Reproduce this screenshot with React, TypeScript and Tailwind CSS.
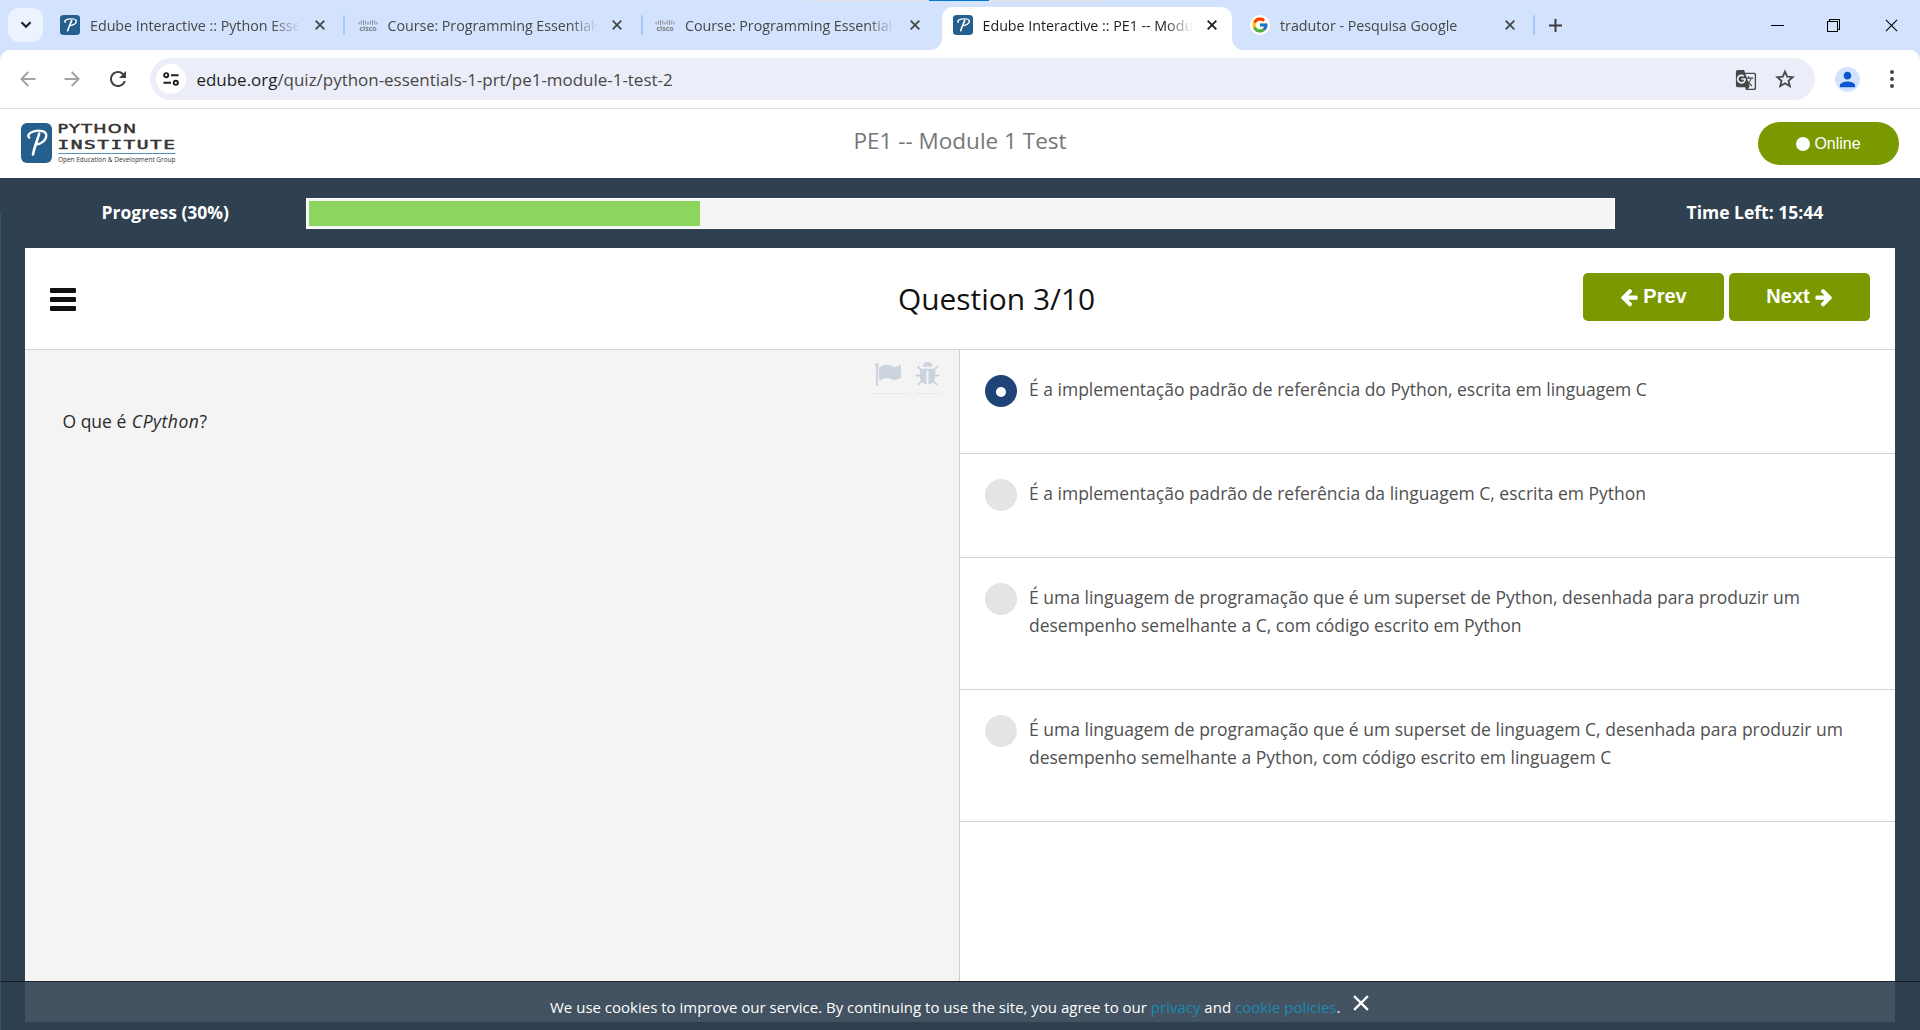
import type { ReactNode } from "react";
import { FcGoogle } from "react-icons/fc";
import { MdGTranslate, MdPerson, MdRefresh } from "react-icons/md";

function PyLogo({ className }: { className: string }) {
  return (
    <svg viewBox="0 0 31 40" preserveAspectRatio="none" className={className}>
      <rect width="31" height="40" rx="6" fill="#255f8d" />
      <g fill="none" stroke="#fff" strokeLinecap="round" strokeLinejoin="round">
        <path d="M8.3 14.6C6.2 13.2 7.600 9.600 12.800 8.300c5.700-1.400 12.600 -.6 12.500 4.200-.1 5-5.200 8.300-9.600 8.800" strokeWidth="2.300" />
        <path d="M18.200 10.500C16.500 17 13.500 23.500 12 31.500" strokeWidth="2.600" />
      </g>
    </svg>
  );
}

function CiscoLogo() {
  const bars = [3, 5, 8, 5, 3, 5, 8, 5, 3];
  return (
    <svg viewBox="0 0 20 20" className="size-5">
      {bars.map((h, i) => (
        <rect key={i} x={0.5 + i * 2.25} y={h === 8 ? 5 : h === 5 ? 5.5 : 7} width="1" height={h === 8 ? 5 : h === 5 ? 4 : 2.5} fill="#8b909a" />
      ))}
      <text x="1.500" y="15.800" textLength="17" lengthAdjust="spacingAndGlyphs" fontFamily="Open Sans, sans-serif" fontWeight="700" fontSize="6.500" fill="#777c86">
        cisco
      </text>
    </svg>
  );
}

function Cross({ className, width = 2 }: { className: string; width?: number }) {
  return (
    <svg viewBox="0 0 10 10" className={className} fill="none" stroke="currentColor" strokeWidth={width}>
      <path d="M.7 .7l8.600 8.600M9.300 .7L.7 9.300" />
    </svg>
  );
}

type TabProps = { icon: ReactNode; title: string; active?: boolean; separator?: boolean };

function Tab({ icon, title, active, separator }: TabProps) {
  return (
    <div className="flex h-[43px] w-[297.5px] shrink-0 items-start">
      <div
        className={
          active
            ? "relative flex h-full w-[290px] items-start rounded-t-[11px] bg-white pl-[11px] text-[#1f1f1f]"
            : "relative flex h-full w-[290px] items-start pl-[11px] text-[#474747]"
        }
      >
        {active && (
          <>
            <span className="absolute bottom-0 -left-3 size-3 bg-[radial-gradient(circle_at_0_0,transparent_11.5px,white_12.5px)]" />
            <span className="absolute -right-3 bottom-0 size-3 bg-[radial-gradient(circle_at_100%_0,transparent_11.5px,white_12.5px)]" />
          </>
        )}
        <span className="mt-2 flex size-5 shrink-0 items-center justify-center">{icon}</span>
        <span className="mt-[9px] ml-2.5 w-[209px] shrink-0 overflow-hidden text-[14.3px] leading-5 tracking-[-0.03px] whitespace-nowrap [mask-image:linear-gradient(to_right,black_182px,transparent_210px)]">
          {title}
        </span>
        <Cross className="mt-[13px] ml-[15.500px] size-[10px] shrink-0" width={1.8} />
      </div>
      {separator && <span className="mt-2 ml-[4px] h-5 w-[2px] rounded-full bg-[#a8c7fa]" />}
    </div>
  );
}

function Browser() {
  return (
    <header className="flex h-[109px] shrink-0 flex-col bg-[#d3e3fd]">
      <div className="relative flex h-[50px] items-end">
        <div className="absolute top-0 left-[809px] flex h-px w-[300px] justify-center bg-[#e1e1e1]">
          <span className="w-[60px] bg-[#0078d7]" />
        </div>
        <div className="mb-2 ml-2 flex h-[34px] w-[35px] items-center justify-center rounded-[11px] bg-[#ecf2fe]">
          <svg viewBox="0 0 12 8" className="h-2 w-3" fill="none" stroke="#1f1f1f" strokeWidth="2.2">
            <path d="M1.500 1.200L6 5.700l4.500-4.500" />
          </svg>
        </div>
        <nav className="ml-1.5 flex">
          <Tab icon={<PyLogo className="size-5" />} title="Edube Interactive :: Python Essen" separator />
          <Tab icon={<CiscoLogo />} title="Course: Programming Essentials" separator />
          <Tab icon={<CiscoLogo />} title="Course: Programming Essentials" />
          <Tab icon={<PyLogo className="size-5" />} title="Edube Interactive :: PE1 -- Modu" active />
          <Tab
            icon={
              <span className="flex size-5 items-center justify-center rounded-full bg-white">
                <FcGoogle className="size-[18px]" />
              </span>
            }
            title="tradutor - Pesquisa Google"
            separator
          />
        </nav>
        <svg viewBox="0 0 13 13" className="mb-[18.5px] ml-[12.5px] size-[13px]" stroke="#3c3c3c" strokeWidth="2">
          <path d="M6.500 0v13M0 6.500h13" />
        </svg>
        <div className="mr-[22px] mb-[18px] ml-auto flex items-center gap-[43px] text-black">
          <svg viewBox="0 0 13 13" className="size-[13px]" shapeRendering="crispEdges">
            <path d="M0 6h13v1H0z" />
          </svg>
          <svg viewBox="0 0 13 13" className="size-[13px]" fill="none" stroke="currentColor" shapeRendering="crispEdges">
            <path d="M.5 2.500h10v10H.5zM2.500 2.500v-2h10v10h-2" />
          </svg>
          <Cross className="ml-[2px] size-[13px]" width={0.85} />
        </div>
      </div>
      <div className="flex h-[59px] items-center rounded-t-[10px] border-b border-[#dfe0e2] bg-white">
        <svg viewBox="0 0 16 16" className="ml-5 size-4" fill="none" stroke="#a3a3a3" strokeWidth="1.9">
          <path d="M15.500 8H1.500M8.300 1L1.400 8l6.900 7" />
        </svg>
        <svg viewBox="0 0 16 16" className="ml-[28px] size-4" fill="none" stroke="#a3a3a3" strokeWidth="1.9">
          <path d="M.5 8h14M7.700 1l6.900 7-6.900 7" />
        </svg>
        <MdRefresh className="ml-[26px] size-[24px] text-[#3f3f3f]" />
        <div className="ml-5 flex h-[42px] w-[1665px] items-center rounded-full bg-[#ebeef8] pl-1.5">
          <span className="flex size-[30px] items-center justify-center rounded-full bg-white">
            <svg viewBox="0 0 16 14" className="h-[14px] w-4" fill="none" stroke="#1f1f1f" strokeWidth="1.9">
              <circle cx="3.200" cy="3.200" r="2.100" />
              <path d="M8 3.200h7.500M.5 10.800H8" />
              <circle cx="12.800" cy="10.800" r="2.100" />
            </svg>
          </span>
          <span className="mt-px ml-[10.500px] text-[16.950px] leading-6 text-[#474747]">
            <span className="text-[#1f1f1f]">edube.org</span>/quiz/python-essentials-1-prt/pe1-module-1-test-2
          </span>
          <MdGTranslate className="mt-px ml-auto size-[22px] text-[#474747]" />
          <svg viewBox="0 0 20 20" className="mr-5 ml-[18px] size-5" fill="none" stroke="#474747" strokeWidth="1.8">
            <path d="M10 2.600l2.200 5.100 5.500.5-4.200 3.600 1.300 5.400L10 14.300l-4.800 2.900 1.300-5.400-4.200-3.600 5.500-.5z" />
          </svg>
        </div>
        <span className="ml-5 flex size-[25px] items-center justify-center rounded-full bg-[#d3e3fd]">
          <MdPerson className="size-[23px] text-[#0b57d0]" />
        </span>
        <span className="ml-[30px] flex flex-col gap-[3.500px]">
          <i className="size-[3.5px] rounded-full bg-[#474747]" />
          <i className="size-[3.5px] rounded-full bg-[#474747]" />
          <i className="size-[3.5px] rounded-full bg-[#474747]" />
        </span>
      </div>
    </header>
  );
}

function SiteHeader() {
  return (
    <div className="grid h-[69px] shrink-0 grid-cols-[minmax(0,1fr)_auto_minmax(0,1fr)] items-start bg-white px-[21px]">
      <div className="mt-[14px] flex">
        <PyLogo className="h-10 w-[31px]" />
        <svg viewBox="0 0 118 42" className="ml-[6px] h-[42px] w-[118px]">
          <g fontSize="13" fill="#333" stroke="#333" strokeWidth=".5">
            <text x="-.5" y="10" textLength="80" lengthAdjust="spacingAndGlyphs" fontFamily="DejaVu Sans, sans-serif" letterSpacing="1">
              PYTHON
            </text>
            <text x="-.5" y="25.800" textLength="119" lengthAdjust="spacingAndGlyphs" fontFamily="DejaVu Sans Mono, monospace" letterSpacing="1">
              INSTITUTE
            </text>
          </g>
          <rect x=".5" y="30" width="117" height="1" fill="#5d8fb6" />
          <text x="0" y="38.500" textLength="117.500" lengthAdjust="spacingAndGlyphs" fontFamily="Open Sans, sans-serif" fontSize="6.500" fill="#333">
            Open Education &amp; Development Group
          </text>
        </svg>
      </div>
      <h1 className="mt-[14px] text-[22.5px] leading-9 text-[#777]">PE1 -- Module 1 Test</h1>
      <button className="mt-[13px] flex h-[43px] w-[141px] items-center justify-center gap-1 justify-self-end rounded-full bg-[#7a9900] font-['Liberation_Sans',sans-serif] text-base text-white">
        <span className="size-[14px] rounded-full bg-white" />
        Online
      </button>
    </div>
  );
}

const ARROW =
  "M1664 896v128q0 53-32.5 90.5t-84.5 37.5h-704l293 294q38 36 38 90t-38 90l-75 76q-37 37-90 37-52 0-91-37l-651-652q-37-37-37-90 0-52 37-91l651-650q38-38 91-38 52 0 90 38l75 74q38 38 38 91t-38 91l-293 293h704q52 0 84.5 37.5t32.5 90.5z";
const FLAG =
  "M320 256q0 72-64 110v1266q0 13-9.5 22.5t-22.5 9.5h-64q-13 0-22.5-9.5t-9.5-22.5v-1266q-64-38-64-110 0-53 37.5-90.5t90.5-37.5 90.5 37.5 37.5 90.5zm1472 64v763q0 25-12.5 38.5t-39.5 27.5q-215 116-369 116-61 0-123.5-22t-108.5-48-115.5-48-142.5-22q-192 0-464 146-17 9-33 9-26 0-45-19t-19-45v-742q0-32 31-55 21-14 79-43 236-120 421-120 107 0 200 29t219 88q38 19 88 19 54 0 117.5-21t110-47 88-47 54.5-21q26 0 45 19t19 45z";
const BUG =
  "M1632 960q0 26-19 45t-45 19h-224q0 171-67 290l208 209q19 19 19 45t-19 45q-18 19-45 19t-45-19l-198-197q-5 5-15 13t-42 28.5-65 36.5-82 29-97 13v-896h-128v896q-51 0-101.5-13.5t-87-33-66-39-43.5-32.5l-15-14-183 207q-20 21-48 21-24 0-43-16-19-18-20.5-44.5t15.5-46.5l202-227q-58-114-58-274h-224q-26 0-45-19t-19-45 19-45 45-19h224v-294l-173-173q-19-19-19-45t19-45 45-19 45 19l173 173h844l173-173q19-19 45-19t45 19 19 45-19 45l-173 173v294h224q26 0 45 19t19 45zm-480-576h-640q0-133 93.5-226.5t226.5-93.5 226.5 93.5 93.5 226.5z";

function Glyph({ d, className }: { d: string; className: string }) {
  return (
    <svg viewBox="0 0 1792 1792" className={className} fill="currentColor">
      <path d={d} />
    </svg>
  );
}

const ANSWERS = [
  { text: ["É a implementação padrão de referência do Python, escrita em linguagem C"], checked: true },
  { text: ["É a implementação padrão de referência da linguagem C, escrita em Python"], checked: false },
  {
    text: [
      "É uma linguagem de programação que é um superset de Python, desenhada para produzir um",
      "desempenho semelhante a C, com código escrito em Python",
    ],
    checked: false,
  },
  {
    text: [
      "É uma linguagem de programação que é um superset de linguagem C, desenhada para produzir um",
      "desempenho semelhante a Python, com código escrito em linguagem C",
    ],
    checked: false,
  },
];

function Quiz() {
  return (
    <section className="mx-[25px] mb-2 flex flex-1 flex-col bg-white">
      <div className="grid h-[102px] shrink-0 grid-cols-[848px_auto_1fr] items-start border-b border-[#d3d6d8] px-[25px]">
        <div className="mt-[40px] flex w-[26px] flex-col gap-[4.500px]">
          <span className="h-[4.5px] rounded-[1px] bg-[#111]" />
          <span className="h-[4.5px] rounded-[1px] bg-[#111]" />
          <span className="h-[4.5px] rounded-[1px] bg-[#111]" />
        </div>
        <h2 className="mt-[31px] text-[29.9px] leading-10 text-[#111]">Question 3/10</h2>
        <div className="mt-[25px] flex gap-[5px] justify-self-end font-['Liberation_Sans',sans-serif] text-xl font-bold text-white">
          <button className="flex h-12 w-[141px] items-center justify-center gap-1 rounded-[5px] bg-[#7a9900] pb-0.5">
            <Glyph d={ARROW} className="mt-px -ml-px size-5" />
            Prev
          </button>
          <button className="flex h-12 w-[141px] items-center justify-center gap-1 rounded-[5px] bg-[#7a9900] pb-0.5">
            Next
            <Glyph d={ARROW} className="mt-px -mr-px size-5 -scale-x-100" />
          </button>
        </div>
      </div>
      <div className="flex flex-1">
        <div className="flex w-[935px] flex-col border-r border-[#cfcfcf] bg-[#f4f4f4]">
          <div className="mt-[11px] flex justify-end gap-[7px] pr-[19px] text-[#ccd3de]">
            <span className="h-[33px] w-[34px] border-b border-dotted border-[#dcdcdc]">
              <Glyph d={FLAG} className="size-[27px]" />
            </span>
            <span className="h-[33px] w-[25px] border-b border-dotted border-[#dcdcdc]">
              <Glyph d={BUG} className="size-[27px] max-w-none" />
            </span>
          </div>
          <p className="mt-[13px] ml-[37.500px] text-[17.5px] leading-7 text-[#2b2b2b]">
            O que é <em className="ml-px tracking-[0.5px]">CPython</em>?
          </p>
        </div>
        <div className="flex-1">
          {ANSWERS.map((answer, i) => (
            <label key={i} className="flex items-start gap-3 border-b border-[#d2d3d5] pt-[25px] pb-[50px] pl-[25px]">
              {answer.checked ? (
                <span className="-mb-1 flex size-8 shrink-0 items-center justify-center rounded-full bg-[#204377]">
                  <span className="mt-px size-[10px] rounded-full bg-white" />
                </span>
              ) : (
                <span className="-mb-1 size-8 shrink-0 rounded-full bg-[#e4e4e4]" />
              )}
              <span className="text-[17.5px] leading-7 whitespace-nowrap text-[#505050]">
                {answer.text.map((line) => (
                  <span key={line} className="block">
                    {line}
                  </span>
                ))}
              </span>
            </label>
          ))}
        </div>
      </div>
    </section>
  );
}

export default function App() {
  return (
    <div className="relative flex h-[1030px] w-[1920px] flex-col overflow-hidden bg-[#2f4050] font-['Open_Sans','Noto_Sans',sans-serif]">
      <Browser />
      <SiteHeader />
      <div className="flex h-[70px] shrink-0 items-start pt-5 text-[17.5px] font-bold text-white">
        <span className="mt-px w-[306px] pl-[101.500px] leading-[26px]">Progress (30%)</span>
        <div className="h-[31px] w-[1309px] border border-white bg-[#f5f5f5] p-0.5">
          <div className="h-[25px] w-[391px] bg-[#8dd55f]" />
        </div>
        <span className="mt-px ml-[71.500px] leading-[26px]">Time Left: 15:44</span>
      </div>
      <Quiz />
      <div className="absolute inset-x-0 bottom-0 flex h-[49px] items-start justify-center border-t border-black/55 bg-[#2f4050]/90 text-[15px] text-white">
        <span className="mt-[13px] -ml-px leading-6">
          We use cookies to improve our service. By continuing to use the site, you agree to our{" "}
          <a className="text-[#1a8ab2]">privacy</a> and <a className="text-[#1a8ab2]">cookie policies</a>.
        </span>
        <Cross className="mt-[12.500px] ml-[12.500px] size-4" width={1.4} />
      </div>
      <div className="absolute top-[213px] bottom-0 left-0 w-px bg-[#34506e]" />
    </div>
  );
}
